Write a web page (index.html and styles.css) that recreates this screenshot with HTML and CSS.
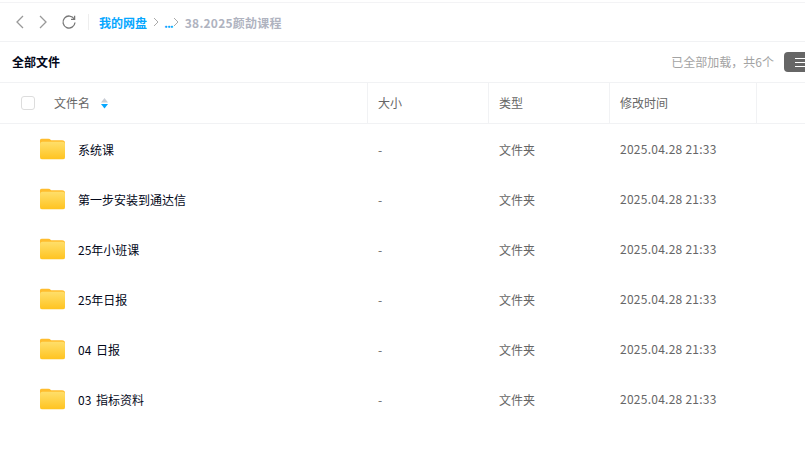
FILE: index.html
```html
<!DOCTYPE html>
<html lang="zh-CN">
<head>
<meta charset="utf-8">
<title>我的网盘</title>
<link rel="stylesheet" href="styles.css">
</head>
<body>
<div class="app">
  <nav class="topbar">
    <svg class="nav-icon" viewBox="0 0 16 16"><path d="M11 2 5 8l6 6"/></svg>
    <svg class="nav-icon" viewBox="0 0 16 16"><path d="M5 2l6 6-6 6"/></svg>
    <svg class="nav-icon refresh" viewBox="0 0 16 16"><path d="M13.2 5A6 6 0 1 0 14 8.5"/><path d="M13.6 1.8V5.4H10"/></svg>
    <span class="divider"></span>
    <a class="crumb">我的网盘</a>
    <svg class="sep" viewBox="0 0 8 10"><path d="M2 1l4 4-4 4"/></svg>
    <a class="crumb dots">...</a>
    <svg class="sep tight" viewBox="0 0 8 10"><path d="M2 1l4 4-4 4"/></svg>
    <span class="current">38.2025颜劼课程</span>
  </nav>
  <header class="toolbar">
    <strong class="all">全部文件</strong>
    <span class="count">已全部加载，共6个</span>
    <button class="view-btn" aria-label="列表视图"><span></span><span></span><span></span></button>
  </header>
  <div class="row head">
    <div class="c-name">
      <span class="check"></span>
      <span class="label">文件名</span>
      <svg class="sort" viewBox="0 0 7 11"><path class="up" d="M3.5 0 7 4.6H0z"/><path class="down" d="M3.5 10.5 0 6h7z"/></svg>
    </div>
    <div class="c-size">大小</div>
    <div class="c-type">类型</div>
    <div class="c-time">修改时间</div>
    <div class="c-rest"></div>
  </div>
  <div class="row item">
    <div class="c-name"><svg class="folder" viewBox="0 0 26 22"><use href="#f"/></svg><span class="fname">系统课</span></div>
    <div class="c-size">-</div><div class="c-type">文件夹</div><div class="c-time">2025.04.28 21:33</div>
  </div>
  <div class="row item">
    <div class="c-name"><svg class="folder" viewBox="0 0 26 22"><use href="#f"/></svg><span class="fname">第一步安装到通达信</span></div>
    <div class="c-size">-</div><div class="c-type">文件夹</div><div class="c-time">2025.04.28 21:33</div>
  </div>
  <div class="row item">
    <div class="c-name"><svg class="folder" viewBox="0 0 26 22"><use href="#f"/></svg><span class="fname">25年小班课</span></div>
    <div class="c-size">-</div><div class="c-type">文件夹</div><div class="c-time">2025.04.28 21:33</div>
  </div>
  <div class="row item">
    <div class="c-name"><svg class="folder" viewBox="0 0 26 22"><use href="#f"/></svg><span class="fname">25年日报</span></div>
    <div class="c-size">-</div><div class="c-type">文件夹</div><div class="c-time">2025.04.28 21:33</div>
  </div>
  <div class="row item">
    <div class="c-name"><svg class="folder" viewBox="0 0 26 22"><use href="#f"/></svg><span class="fname">04 日报</span></div>
    <div class="c-size">-</div><div class="c-type">文件夹</div><div class="c-time">2025.04.28 21:33</div>
  </div>
  <div class="row item">
    <div class="c-name"><svg class="folder" viewBox="0 0 26 22"><use href="#f"/></svg><span class="fname">03 指标资料</span></div>
    <div class="c-size">-</div><div class="c-type">文件夹</div><div class="c-time">2025.04.28 21:33</div>
  </div>
</div>
<svg class="defs" width="0" height="0">
  <defs>
    <linearGradient id="g" x1="0" y1="0" x2="0" y2="1"><stop offset="0" stop-color="#ffdf6b"/><stop offset="1" stop-color="#ffc31f"/></linearGradient>
    <symbol id="f" viewBox="0 0 26 22">
      <path d="M2 0h6.5c1 0 1.6.4 2.2 1l1 1H23a3 3 0 0 1 3 3v2H0V2a2 2 0 0 1 2-2z" fill="#ffbd2e"/>
      <rect y="3.4" width="26" height="18.6" rx="2.6" fill="url(#g)"/>
    </symbol>
  </defs>
</svg>
</body>
</html>
```

FILE: styles.css
```css
* { box-sizing: border-box; }
html, body { margin: 0; height: 100%; overflow: hidden; background: #fff; }
body { font: 12px/1.5 "Noto Sans CJK SC", "Noto Sans", sans-serif; color: #666; }
.app { width: 805px; padding-top: 2px; }
.defs { display: block; }

.topbar { height: 40px; display: flex; align-items: center; padding-left: 12px; border-top: 1px solid #f3f3f5; border-bottom: 1px solid #f1f2f4; }
.nav-icon { width: 16px; height: 16px; margin-right: 7px; fill: none; stroke: #999; stroke-width: 1.3; }
.refresh { margin-left: 3px; margin-right: 0; stroke: #777; }
.divider { width: 1px; height: 16px; background: #eee; margin: 0 10px 0 11px; }
.crumb { color: #06a7ff; font-weight: 700; padding-top: 1px; }
.dots { letter-spacing: -1px; }
.sep { width: 8px; height: 10px; margin: 0 4px 0 5px; fill: none; stroke: #aaa; stroke-width: 1; }
.sep.tight { margin: 0 3px 0 -1px; }
.current { color: #afb3bf; font-weight: 700; margin-left: 2px; padding-top: 1px; letter-spacing: .25px; }

.toolbar { height: 41px; display: flex; align-items: center; padding-left: 12px; border-bottom: 1px solid #f1f2f4; }
.all { color: #03081a; font-weight: 700; }
.count { margin-left: auto; color: #a3a3a3; }
.view-btn { width: 22px; height: 20px; flex: none; margin: 0 0 0 9px; padding: 0 0 0 11px; border: 0; border-radius: 4px 0 0 4px; background: #666; display: flex; flex-direction: column; justify-content: center; gap: 3px; overflow: hidden; transform: translateX(1px); }
.view-btn span { display: block; width: 10px; height: 1px; background: #fff; flex: none; }

.row { display: flex; align-items: center; font-size: 12px; }
.head { height: 41px; border-bottom: 1px solid #f1f2f4; }
.head > div { height: 100%; display: flex; align-items: center; }
.item { height: 50px; }
.c-name { width: 367px; display: flex; align-items: center; flex: none; }
.c-size, .c-type { width: 121px; flex: none; padding-left: 11px; }
.c-time { width: 147px; flex: none; padding-left: 11px; }
.item .c-size, .item .c-type { color: #666; padding-top: 1px; }
.item .c-time { color: #666; letter-spacing: .25px; }
.head .c-size, .head .c-type, .head .c-time, .head .c-rest { border-left: 1px solid #f1f2f4; }
.c-rest { flex: 1; }
.head .c-size { padding-left: 10px; }
.head .c-type, .head .c-time { padding-left: 10px; }

.check { width: 14px; height: 14px; margin-left: 21px; border: 1px solid #ddd; border-radius: 3px; flex: none; }
.label { margin-left: 19px; }
.sort { width: 7px; height: 11px; margin-left: 11px; }
.sort .up { fill: #c8ccd4; }
.sort .down { fill: #06a7ff; }

.folder { width: 25px; height: 22px; margin-left: 40px; flex: none; }
.fname { margin-left: 13px; color: #03081a; padding-top: 1px; word-spacing: 2px; }
```
